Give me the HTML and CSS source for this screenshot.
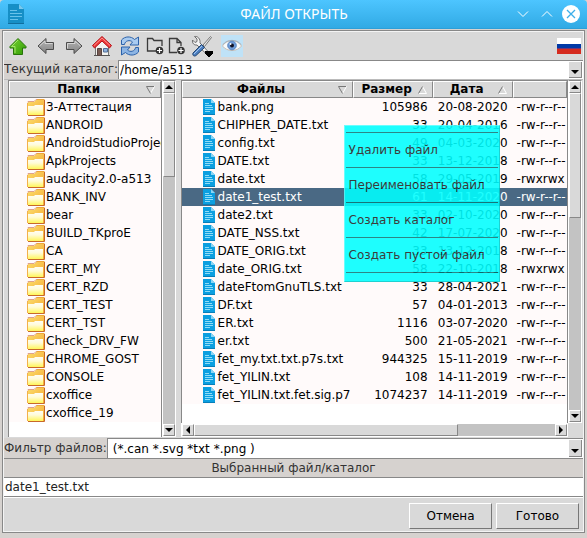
FILE: index.html
```html
<!DOCTYPE html>
<html lang="ru">
<head>
<meta charset="utf-8">
<title>ФАЙЛ ОТКРЫТЬ</title>
<link rel="stylesheet" href="styles.css">
</head>
<body>
<svg class="defs" aria-hidden="true">
  <defs>
    <linearGradient id="gf" x1="0" y1="0" x2="0" y2="1"><stop offset="0" stop-color="#fffdf4"/><stop offset=".4" stop-color="#fffbd8"/><stop offset="1" stop-color="#fff65a"/></linearGradient>
    <linearGradient id="gb" x1="0" y1="0" x2="1" y2="1"><stop offset="0" stop-color="#fbdc6a"/><stop offset="1" stop-color="#f5a833"/></linearGradient>
    <linearGradient id="gg" x1="0" y1="0" x2="1" y2="1"><stop offset="0" stop-color="#7ad433"/><stop offset="1" stop-color="#2f9a05"/></linearGradient>
    <linearGradient id="gy" x1="0" y1="0" x2="0" y2="1"><stop offset="0" stop-color="#b5b5b5"/><stop offset="1" stop-color="#858585"/></linearGradient>
  </defs>
  <symbol id="folder" viewBox="0 0 18 17">
    <path d="M1 3h6l2-2h8v15H1z" fill="url(#gb)"/>
    <path d="M1 3.500V2.500h6l2-2h2" fill="none" stroke="#dda08c"/>
    <path d="M10 .5h7.500" stroke="#eda53a"/>
    <path d="M17.500 1v15.500H1" fill="none" stroke="#c8682a"/>
    <path d="M0 7h7l1-1h8v10H0z" fill="url(#gf)"/>
    <path d="M.5 16V4" stroke="#f3b04a"/>
  </symbol>
  <symbol id="doc" viewBox="0 0 12 16">
    <path d="M0 0h8l4 4v12H0z" fill="#0c9fe0"/>
    <path d="M8 0l4 4H8z" fill="#8bd6f5"/>
    <path d="M0 15h12v1H0z" fill="#087eb8"/>
    <path d="M2 4.500h4M2 6.500h7M2 8.500h8M2 10.500h8M2 12.500h5" stroke="#8edcf8"/>
  </symbol>
</svg>

<header class="titlebar">
  <svg class="app-icon" viewBox="0 0 16 20"><path d="M0 0h11l5 5v15H0z" fill="#168fc6"/><path d="M11 0l5 5h-5z" fill="#79c9ee"/><path d="M2 6.500h7M2 9.500h12M2 12.500h12M2 15.500h8" stroke="#69c2ea"/><path d="M0 19.500h16" stroke="#106f9f"/></svg>
  <h1>ФАЙЛ ОТКРЫТЬ</h1>
  <div class="window-buttons">
    <button type="button" aria-label="Свернуть"><svg viewBox="0 0 18 18"><path d="M4 6.500l5 5 5-5" fill="none" stroke="#fff"/></svg></button>
    <button type="button" aria-label="Развернуть"><svg viewBox="0 0 18 18"><path d="M4 11.500l5-5 5 5" fill="none" stroke="#fff"/></svg></button>
    <button type="button" aria-label="Закрыть"><svg viewBox="0 0 18 18"><circle cx="9" cy="9" r="9" fill="#fff"/><path d="M5 5l8 8M13 5l-8 8" stroke="#3daee9" stroke-width="1.300"/></svg></button>
  </div>
</header>

<main class="dialog">
  <nav class="toolbar">
    <button type="button" aria-label="Вверх"><svg viewBox="0 0 22 22"><path d="M11 3.500l8 8v1.500h-3.500v6.500h-9V13H3v-1.500z" fill="url(#gg)" stroke="#27740a"/><path d="M11 5l-6.500 6.500H8v6.500" fill="none" stroke="#a4e66b"/></svg></button>
    <button type="button" aria-label="Назад"><svg viewBox="0 0 22 22"><path d="M3 11l8-7.500v4h7.500v7H11v4z" fill="url(#gy)" stroke="#4c4c4c"/><path d="M4.500 11L10 6v2.500h7.500" fill="none" stroke="#d5d5d5"/></svg></button>
    <button type="button" aria-label="Вперёд"><svg viewBox="0 0 22 22"><path d="M19 11l-8-7.500v4H3.500v7H11v4z" fill="url(#gy)" stroke="#4c4c4c"/><path d="M17.500 11L12 6v2.500H4.500v5" fill="none" stroke="#d5d5d5"/></svg></button>
    <button type="button" class="home" aria-label="Домой"><svg viewBox="0 0 22 22"><path d="M4.500 10.500L11 4l6.500 6.500v10h-13z" fill="#f4f4f1" stroke="#777"/><path d="M3 20.500h16" stroke="#555"/><path d="M6.500 13.500h4v7h-4z" fill="#795c54" stroke="#574441"/><path d="M12.500 13.500h4v3.500h-4z" fill="#8eb3df" stroke="#526f98"/><path d="M11 1.500l9.500 9-2 2.500L11 6l-7.500 7-2-2.500z" fill="#ef3939" stroke="#b5131a"/><path d="M11 3L3 10.500M11 3l8 7.500" stroke="#ff8f8c"/></svg></button>
    <button type="button" aria-label="Обновить"><svg viewBox="0 0 22 22"><path d="M2.500 9.500V5C6 1 12 1 15.500 4.500L19.500 2v8h-8.500l2.500-3C11 4.500 6 5.500 5.500 9.500z" fill="#a9cbf0" stroke="#2c62aa"/><path d="M19.500 12.500V17c-3.500 4-9.500 4-13 .5L2.500 20v-8H11l-2.500 3c2.500 2.500 7.500 1.500 8-2.500z" fill="#8db5e4" stroke="#2c62aa"/></svg></button>
    <button type="button" class="small" aria-label="Новый каталог"><svg viewBox="0 0 18 18"><path d="M10 14H1.500V1.500h5l1.500 2h8V9" fill="none" stroke="#3b3b3b" stroke-width="1.300"/><circle cx="13.500" cy="13.500" r="3.800" fill="#353535"/><path d="M13.500 11v5M11 13.500h5" stroke="#fff" stroke-width="1.200"/></svg></button>
    <button type="button" class="small" aria-label="Новый файл"><svg viewBox="0 0 18 18"><path d="M9 15.500H1.500v-14H9l4 4V9M9 1.500v4h4" fill="none" stroke="#3b3b3b" stroke-width="1.300"/><circle cx="13" cy="13.500" r="3.800" fill="#353535"/><path d="M13 11v5M10.500 13.500h5" stroke="#fff" stroke-width="1.200"/></svg></button>
    <button type="button" class="tools" aria-label="Настройки"><svg viewBox="0 0 22 22"><path d="M3.500 1.500L6 4v2.500l-2 1L1.500 5c-.5 3 1.500 5.500 4.500 5l10.500 10 2-2L9 8c.5-4-2-7-5.500-6.500z" fill="#f4f4f4" stroke="#6e6e6e"/><path d="M19.500 1.500l1 1-7 9-1.500-1.500z" fill="#e7e7e7" stroke="#777"/><path d="M10.500 9.500l3 3-8.500 8c-2 1.500-4-.5-3-2.500z" fill="#4c7fc1" stroke="#23466f"/><path d="M11 11l-8 8" stroke="#a7c8ef"/><path d="M14 16h8v3h-1v1h-1v1h-1v1h-2v-1h-1v-1h-1v-1h-1z" fill="#000"/></svg></button>
    <button type="button" class="eye" aria-label="Показать скрытые"><svg viewBox="0 0 22 22"><path d="M1.500 11C5 4.500 16 3.500 20.500 11 16 17 6 17 1.500 11z" fill="#f8fbfd" stroke="#c9bdb2"/><path d="M2 9.500C6 4 16 4 20 9.500" fill="none" stroke="#a3b0bd"/><circle cx="11" cy="10.500" r="4.300" fill="#6f9cd8" stroke="#5a86c0"/><circle cx="11" cy="10.500" r="2" fill="#112"/><circle cx="9.500" cy="9" r="1" fill="#fff"/></svg></button>
    <button type="button" class="flag" aria-label="Русский"><svg viewBox="0 0 24 16"><path d="M0 0h24v6H0z" fill="#fff"/><path d="M0 6h24v5H0z" fill="#0039a6"/><path d="M0 10h24v1H0z" fill="#6f3474"/><path d="M0 11h24v5H0z" fill="#d52b1e"/></svg></button>
  </nav>

  <div class="field-row">
    <label for="dir">Текущий каталог:</label>
    <div class="combo"><select id="dir"><option>/home/a513</option></select><span class="drop"></span></div>
  </div>

  <section class="panes">
    <div class="pane folders">
      <div class="view">
        <table>
          <thead><tr><th>Папки<svg class="sort" viewBox="0 0 9 8"><path d="M8.500 .5L4.500 7.500" stroke="#fff"/><path d="M8 .5H.5l4 7" fill="none" stroke="#777"/></svg></th></tr></thead>
          <tbody id="folders"></tbody>
        </table>
      </div>
      <div class="vbar"><i class="arrow up"></i><i class="thumb"></i><i class="track"></i><i class="arrow down"></i></div>
    </div>
    <div class="pane files">
      <div class="view">
        <table>
          <colgroup><col class="c-name"><col class="c-size"><col class="c-date"><col></colgroup>
          <thead><tr>
            <th>Файлы<svg class="sort" viewBox="0 0 9 8"><path d="M8.500 .5L4.500 7.500" stroke="#fff"/><path d="M8 .5H.5l4 7" fill="none" stroke="#777"/></svg></th>
            <th>Размер<svg class="sort" viewBox="0 0 9 8"><path d="M4.500 .5l4 7H.5" fill="none" stroke="#fff"/><path d="M.5 7.500l4-7" stroke="#777"/></svg></th>
            <th>Дата<svg class="sort" viewBox="0 0 9 8"><path d="M4.500 .5l4 7H.5" fill="none" stroke="#fff"/><path d="M.5 7.500l4-7" stroke="#777"/></svg></th>
            <th></th>
          </tr></thead>
          <tbody id="files"></tbody>
        </table>
      </div>
      <div class="vbar"><i class="arrow up"></i><i class="thumb"></i><i class="track"></i><i class="arrow down"></i></div>
      <div class="hbar"><i class="arrow left"></i><i class="thumb"></i><i class="track"></i><i class="arrow right"></i></div>
      <div class="menu">
        <button type="button">Удалить файл</button>
        <button type="button">Переименовать файл</button>
        <button type="button">Создать каталог</button>
        <button type="button">Создать пустой файл</button>
      </div>
    </div>
  </section>

  <div class="field-row filter">
    <label for="filter">Фильтр файлов:</label>
    <div class="combo"><select id="filter"><option>(*.can *.svg *txt *.png )</option></select><span class="drop"></span></div>
  </div>

  <label class="chosen-label" for="chosen">Выбранный файл/каталог</label>
  <input id="chosen" class="chosen" type="text" value="date1_test.txt">

  <footer class="actions">
    <button type="button">Отмена</button>
    <button type="button">Готово</button>
  </footer>
</main>
<script src="app.js"></script>
</body>
</html>
```
FILE: styles.css
```css
* { box-sizing: border-box; }

body {
  margin: 0;
  min-height: 100vh;
  display: flex;
  flex-direction: column;
  background: #d6d2cf;
  color: #000;
  font: 12px/18px "DejaVu Sans", sans-serif;
}

button, input, select { font: inherit; color: inherit; border-radius: 0; margin: 0; }
button { padding: 0; border: 0; background: none; }
svg { display: block; }
.defs { position: absolute; width: 0; height: 0; }

.titlebar {
  display: grid;
  grid-template-columns: 80px 1fr 80px;
  align-items: center;
  height: 29px;
  flex: none;
  padding: 0 7px 0 8px;
  background: linear-gradient(#4dc5ff, #31aae4);
  border-bottom: 1px solid #2d9fd8;
  border-radius: 4px 4px 0 0;
  color: #fff;
}
.app-icon { width: 16px; height: 20px; }
.titlebar h1 { margin: 0; text-align: center; font: 14px/18px "Noto Sans", sans-serif; }
.window-buttons { display: flex; justify-content: flex-end; gap: 6px; }
.window-buttons button, .window-buttons svg { width: 18px; height: 18px; }

.dialog {
  flex: 1;
  display: flex;
  flex-direction: column;
  margin: 1px 2px 5px;
  background: #d9d9d9;
  border: 1px solid #888;
  outline: 1px solid #f4f4f4;
  outline-offset: -2px;
}

.toolbar {
  display: flex;
  align-items: center;
  gap: 6px;
  height: 29px;
  padding: 0 3px 0 4px;
}
.toolbar button { width: 22px; height: 22px; }
.toolbar .small { width: 18px; height: 18px; margin: 0 -1px; }
.toolbar .flag { width: 24px; height: 16px; margin-left: auto; }
.toolbar .eye { background: #bfe2f7; margin-left: 2px; }

.field-row { display: flex; height: 19px; }
.field-row label { background: #d6d2cf; color: #333; padding-left: 1px; white-space: nowrap; }
.combo {
  flex: 1;
  display: grid;
  background: #fff;
  border-top: 1px solid #888;
  border-left: 1px solid #888;
}
.combo select {
  grid-area: 1 / 1;
  appearance: none;
  border: 0;
  padding: 0 16px 0 1px;
  background: transparent;
  outline: 0;
  height: 18px;
}
.drop {
  grid-area: 1 / 1;
  justify-self: end;
  display: flex;
  align-items: flex-end;
  justify-content: center;
  width: 13px;
  margin: 1px 2px 1px 0;
  padding-bottom: 3px;
  background: #d9d9d9;
  border-right: 1px solid #888;
  border-bottom: 1px solid #888;
  pointer-events: none;
}
.drop::after { content: ""; border: 4px solid transparent; border-top-color: #000; border-bottom: 0; }

.panes {
  flex: 1;
  display: grid;
  grid-template-columns: minmax(0, 167fr) minmax(0, 400fr);
  gap: 5px;
  padding: 0 2px 0 5px;
  border-top: 1px solid #bbb;
}
.pane { position: relative; display: grid; grid-template-columns: minmax(0, 1fr) 14px; }
.files { grid-template-rows: 1fr 14px; }
.view {
  overflow: hidden;
  background: #fff;
  border: 1px solid #888;
  border-bottom: 0;
}
table { width: 100%; table-layout: fixed; border-collapse: separate; border-spacing: 0; }
.c-name { width: 171px; }
.c-size, .c-date { width: 80px; }
th {
  position: relative;
  height: 17px;
  padding: 0 12px 0 0;
  line-height: 15px;
  background: #d9d9d9;
  border: 1px solid #888;
  border-top-color: #fff;
  border-left-color: #fff;
}
.sort { position: absolute; top: 4px; right: 5px; width: 9px; height: 8px; }
td { height: 18px; padding: 0; background: #fffafa; white-space: nowrap; overflow: hidden; }
td.num { text-align: right; padding-right: 5px; }
td.perm { padding-left: 4px; }
.selected td { background: #4a6984; color: #fff; }
.name { display: flex; height: 18px; align-items: center; }
.folders .name { padding-left: 18px; gap: 1px; }
.folders .name svg { width: 18px; height: 17px; flex: none; }
.files .name { padding-left: 21px; gap: 3px; }
.files .name svg { width: 12px; height: 16px; flex: none; }

.vbar, .hbar { display: flex; background: #c3c3c3; border: 1px solid #fff; }
.vbar { flex-direction: column; border-top-color: #888; }
.arrow {
  display: flex;
  flex: none;
  align-items: center;
  justify-content: center;
  width: 12px;
  height: 12px;
  background: #d9d9d9;
  border: 1px solid #888;
  border-top-color: #fff;
  border-left-color: #fff;
}
.arrow::after { content: ""; border: 4px solid transparent; }
.up::after { border-bottom-color: #000; border-top: 0; }
.down::after { border-top-color: #000; border-bottom: 0; }
.left::after { border-right-color: #000; border-left: 0; }
.right::after { border-left-color: #000; border-right: 0; }
.thumb {
  background: #d9d9d9;
  border: 1px solid #888;
  border-top-color: #fff;
  border-left-color: #fff;
}
.track { flex: 75; }
.vbar .thumb { flex: 25; }
.files .vbar .thumb { flex: 39; }
.files .vbar .track { flex: 61; }
.hbar .thumb { flex: 73; }
.hbar .track { flex: 27; }

.menu {
  position: absolute;
  top: 45px;
  left: 163px;
  width: 156px;
  padding: 6px 1px 8px;
  background: #0ff;
  border: 1px solid #0cc;
  border-top-color: #5ff;
  border-left-color: #5ff;
  opacity: .88;
}
.menu button {
  display: block;
  width: 100%;
  height: 35px;
  padding-left: 3px;
  text-align: left;
  color: #222;
  border-bottom: 1px solid #177;
}
.menu button:first-child { height: 36px; border-top: 1px solid #177; }

.filter { margin-top: 1px; height: 20px; }
.filter label { line-height: 20px; }
.filter .combo select { padding-left: 5px; height: 19px; }
.chosen-label {
  text-align: center;
  color: #333;
  background: #d6d2cf;
  border-top: 1px solid #888;
}
.chosen {
  width: 100%;
  height: 20px;
  padding: 0 2px;
  border: 1px solid #888;
  border-width: 1px 0;
  background: #fff;
  color: #222;
  outline: 0;
}
.actions {
  display: flex;
  justify-content: flex-end;
  gap: 4px;
  padding: 5px 5px 3px;
  border-top: 1px solid #fff;
}
.actions button {
  width: 83px;
  height: 26px;
  border: 1px solid #777;
  border-top-color: #fff;
  border-left-color: #fff;
}
```
FILE: app.js
```js
const folders = ['3-Аттестация', 'ANDROID', 'AndroidStudioProjects', 'ApkProjects', 'audacity2.0-a513',
  'BANK_INV', 'bear', 'BUILD_TKproE', 'CA', 'CERT_MY', 'CERT_RZD', 'CERT_TEST', 'CERT_TST',
  'Check_DRV_FW', 'CHROME_GOST', 'CONSOLE', 'cxoffice', 'cxoffice_19'];

const files = [
  ['bank.png', 105986, '20-08-2020', '-rw-r--r--'],
  ['CHIPHER_DATE.txt', 33, '20-04-2016', '-rw-r--r--'],
  ['config.txt', 49, '04-03-2020', '-rw-r--r--'],
  ['DATE.txt', 33, '13-12-2018', '-rw-r--r--'],
  ['date.txt', 58, '29-05-2019', '-rwxrwx'],
  ['date1_test.txt', 61, '14-11-2020', '-rw-r--r--'],
  ['date2.txt', 33, '02-10-2020', '-rw-r--r--'],
  ['DATE_NSS.txt', 42, '17-07-2020', '-rw-r--r--'],
  ['DATE_ORIG.txt', 33, '13-12-2018', '-rw-r--r--'],
  ['date_ORIG.txt', 58, '22-10-2018', '-rwxrwx'],
  ['dateFtomGnuTLS.txt', 33, '28-04-2021', '-rw-r--r--'],
  ['DF.txt', 57, '04-01-2013', '-rw-r--r--'],
  ['ER.txt', 1116, '03-07-2020', '-rw-r--r--'],
  ['er.txt', 500, '21-05-2021', '-rw-r--r--'],
  ['fet_my.txt.txt.p7s.txt', 944325, '15-11-2019', '-rw-r--r--'],
  ['fet_YILIN.txt', 108, '14-11-2019', '-rw-r--r--'],
  ['fet_YILIN.txt.fet.sig.p7', 1074237, '14-11-2019', '-rw-r--r--']
];

const nameCell = (icon, name) =>
  `<td><div class="name"><svg><use href="#${icon}"/></svg><span>${name}</span></div></td>`;

document.getElementById('folders').innerHTML =
  folders.map(name => `<tr>${nameCell('folder', name)}</tr>`).join('');

document.getElementById('files').innerHTML = files.map(([name, size, date, perm]) =>
  `<tr${name === 'date1_test.txt' ? ' class="selected"' : ''}>${nameCell('doc', name)}` +
  `<td class="num">${size}</td><td class="num">${date}</td><td class="perm">${perm}</td></tr>`).join('');
```
